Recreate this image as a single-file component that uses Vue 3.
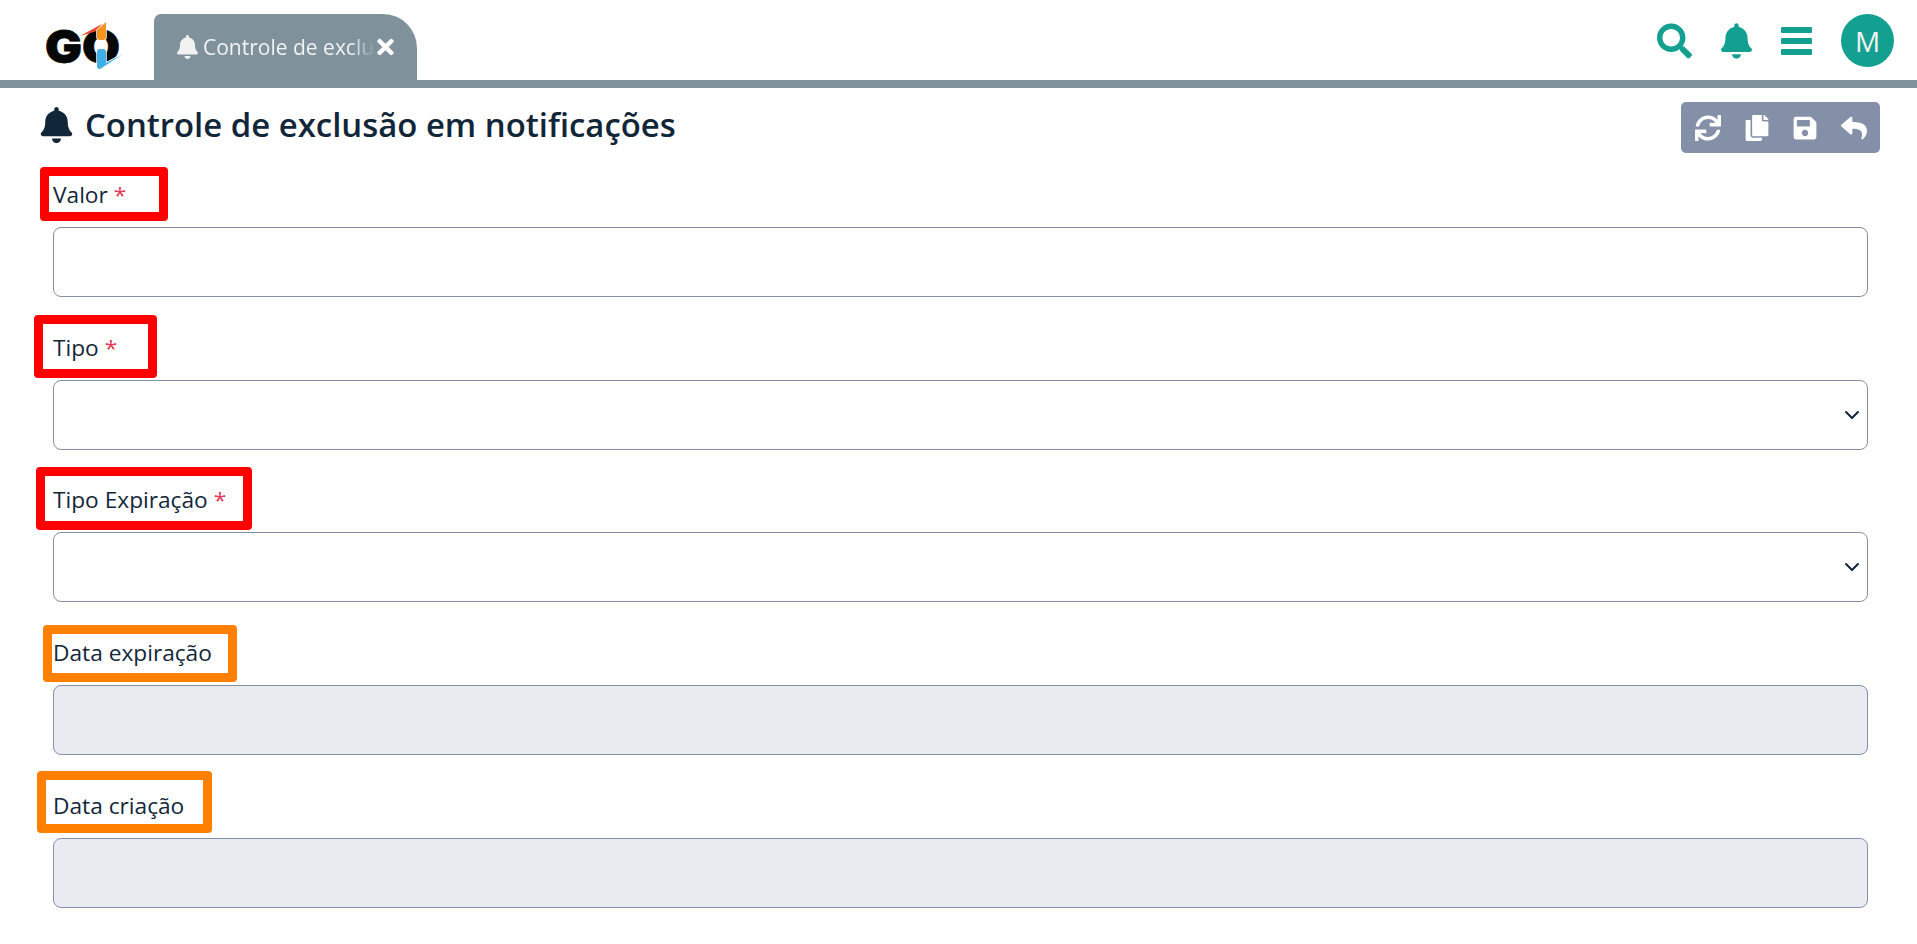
<template>
  <div class="pagina">
    <!-- Barra superior -->
    <header class="topo">
      <div class="marca">
        <svg class="logo" viewBox="0 0 78 48">
          <text x="0" y="41.5" textLength="75" lengthAdjust="spacingAndGlyphs" class="logo-letras">GO</text>
          <path d="M35 15 L57 3 L52 10 Z" fill="#e8452a" />
          <path d="M52 9 L61 1 V16 Q61 19 58 19 H55 Q52 19 52 16 Z" fill="#f7941d" stroke="#fff" stroke-width="1.5" paint-order="stroke" />
          <path d="M52 31 Q52 28 55 28 H58 Q61 28 61 31 V42 L78 33 L55 48 Q52 48 52 45 Z" fill="#3fb0e8" stroke="#fff" stroke-width="1.5" paint-order="stroke" />
        </svg>
      </div>
      <div class="aba">
        <svg class="aba-sino" viewBox="0 0 448 512"><path :d="icones.sino" /></svg>
        <span class="aba-texto">Controle de exclusão em notificações</span>
        <svg class="aba-fechar" viewBox="0 0 352 512"><path :d="icones.fechar" /></svg>
      </div>
      <nav class="topo-acoes">
        <svg class="icone-busca" viewBox="0 0 512 512"><path :d="icones.busca" /></svg>
        <svg class="icone-topo" viewBox="0 0 448 512"><path :d="icones.sino" /></svg>
        <svg class="icone-topo" viewBox="0 0 31 36">
          <rect y="4" width="31" height="6" rx="1" />
          <rect y="15" width="31" height="6" rx="1" />
          <rect y="26" width="31" height="6" rx="1" />
        </svg>
        <div class="avatar">M</div>
      </nav>
    </header>

    <main class="conteudo">
      <div class="cabecalho">
        <h1 class="titulo">
          <svg class="titulo-sino" viewBox="0 0 448 512"><path :d="icones.sino" /></svg>
          Controle de exclusão em notificações
        </h1>
        <div class="ferramentas">
          <svg viewBox="0 0 512 512"><path :d="icones.sync" /></svg>
          <svg viewBox="0 0 448 512"><path :d="icones.copiar" /></svg>
          <svg viewBox="0 0 448 512"><path :d="icones.salvar" /></svg>
          <svg viewBox="0 0 512 512"><path :d="icones.voltar" /></svg>
        </div>
      </div>

      <!-- Campos do formulário, com a marcação vermelha ou laranja por cima do rótulo -->
      <div v-for="campo in campos" :key="campo.rotulo" class="campo">
        <label class="rotulo">
          {{ campo.rotulo }}<span v-if="campo.obrigatorio" class="asterisco"> *</span>
          <span
            class="marcacao"
            :style="{ left: campo.marca[0] + 'px', top: campo.marca[1] + 'px', width: campo.marca[2] + 'px', height: campo.marca[3] + 'px', borderColor: campo.obrigatorio ? '#ff0000' : '#ff7f00' }"
          ></span>
        </label>
        <select v-if="campo.tipo === 'select'" class="entrada seletor"></select>
        <input v-else class="entrada" type="text" :disabled="campo.tipo === 'bloqueado'" />
      </div>
    </main>
  </div>
</template>

<script setup>
const campos = [
  { rotulo: 'Valor', obrigatorio: true, tipo: 'texto', marca: [-13, -13, 128, 54] },
  { rotulo: 'Tipo', obrigatorio: true, tipo: 'select', marca: [-19, -18, 123, 63] },
  { rotulo: 'Tipo Expiração', obrigatorio: true, tipo: 'select', marca: [-17, -18, 216, 63] },
  { rotulo: 'Data expiração', obrigatorio: false, tipo: 'bloqueado', marca: [-10, -13, 194, 57] },
  { rotulo: 'Data criação', obrigatorio: false, tipo: 'bloqueado', marca: [-16, -20, 175, 62] }
]

const icones = {
  sino: 'M224 512c35.32 0 63.97-28.65 63.97-64H160.03c0 35.35 28.65 64 63.97 64zm215.39-149.71c-19.32-20.76-55.47-51.99-55.47-154.29 0-77.7-54.48-139.9-127.94-155.16V32c0-17.67-14.32-32-31.98-32s-31.98 14.33-31.98 32v20.84C118.56 68.1 64.08 130.3 64.08 208c0 102.3-36.15 133.53-55.47 154.29-6 6.45-8.66 14.16-8.61 21.71.11 16.4 12.98 32 32.1 32h383.8c19.12 0 32-15.6 32.1-32 .05-7.55-2.61-15.27-8.61-21.71z',
  busca: 'M505 442.7L405.3 343c-4.5-4.5-10.6-7-17-7H372c27.6-35.3 44-79.7 44-128C416 93.1 322.9 0 208 0S0 93.1 0 208s93.1 208 208 208c48.3 0 92.7-16.4 128-44v16.3c0 6.4 2.5 12.5 7 17l99.7 99.7c9.4 9.4 24.6 9.4 33.9 0l28.3-28.3c9.4-9.4 9.4-24.6.1-34zM208 336c-70.7 0-128-57.2-128-128 0-70.7 57.2-128 128-128 70.7 0 128 57.2 128 128 0 70.7-57.2 128-128 128z',
  fechar: 'M242.72 256l100.07-100.07c12.28-12.28 12.28-32.19 0-44.48l-22.24-22.24c-12.28-12.28-32.19-12.28-44.48 0L176 189.28 75.93 89.21c-12.28-12.28-32.19-12.28-44.48 0L9.21 111.45c-12.28 12.28-12.28 32.19 0 44.48L109.28 256 9.21 356.07c-12.28 12.28-12.28 32.19 0 44.48l22.24 22.24c12.28 12.28 32.2 12.28 44.48 0L176 322.72l100.07 100.07c12.28 12.28 32.2 12.28 44.48 0l22.24-22.24c12.28-12.28 12.28-32.19 0-44.48L242.72 256z',
  sync: 'M440.65 12.57l4 82.77A247.16 247.16 0 0 0 255.83 8C134.73 8 33.91 94.92 12.29 209.82A12 12 0 0 0 24.09 224h49.05a12 12 0 0 0 11.67-9.26 175.91 175.91 0 0 1 317-56.94l-101.46-4.86a12 12 0 0 0-12.57 12v47.41a12 12 0 0 0 12 12H500a12 12 0 0 0 12-12V12a12 12 0 0 0-12-12h-47.37a12 12 0 0 0-11.98 12.57zM255.83 432a175.61 175.61 0 0 1-146-77.8l101.8 4.87a12 12 0 0 0 12.57-12v-47.4a12 12 0 0 0-12-12H12a12 12 0 0 0-12 12V500a12 12 0 0 0 12 12h47.35a12 12 0 0 0 12-12.6l-4.15-82.57A247.17 247.17 0 0 0 255.83 504c121.11 0 221.93-86.92 243.55-201.82a12 12 0 0 0-11.8-14.18h-49.05a12 12 0 0 0-11.67 9.26A175.86 175.86 0 0 1 255.83 432z',
  copiar: 'M320 448v40c0 13.255-10.745 24-24 24H24c-13.255 0-24-10.745-24-24V120c0-13.255 10.745-24 24-24h72v296c0 30.879 25.121 56 56 56h168zm0-344V0H152c-13.255 0-24 10.745-24 24v368c0 13.255 10.745 24 24 24h272c13.255 0 24-10.745 24-24V128H344c-13.2 0-24-10.8-24-24zm120.971-31.029L375.029 7.029A24 24 0 0 0 358.059 0H352v96h96v-6.059a24 24 0 0 0-7.029-16.97z',
  salvar: 'M433.941 129.941l-83.882-83.882A48 48 0 0 0 316.118 32H48C21.49 32 0 53.49 0 80v352c0 26.51 21.49 48 48 48h352c26.51 0 48-21.49 48-48V163.882a48 48 0 0 0-14.059-33.941zM224 416c-35.346 0-64-28.654-64-64 0-35.346 28.654-64 64-64s64 28.654 64 64c0 35.346-28.654 64-64 64zm96-304.52V212c0 6.627-5.373 12-12 12H76c-6.627 0-12-5.373-12-12V108c0-6.627 5.373-12 12-12h228.52c3.183 0 6.235 1.264 8.485 3.515l3.48 3.48A11.996 11.996 0 0 1 320 111.48z',
  voltar: 'M8.309 189.836L184.313 37.851C199.719 24.546 224 35.347 224 56.015v80.053c160.629 1.839 288 34.032 288 186.258 0 61.441-39.581 122.309-83.333 154.132-13.653 9.931-33.111-2.533-28.077-18.631 45.344-145.012-21.507-183.51-176.59-185.742V360c0 20.7-24.3 31.453-39.687 18.164l-176.004-152c-11.071-9.562-11.086-26.753 0-36.328z'
}
</script>

<style>
html, body { margin: 0; background: #fff; }
</style>

<style scoped>
.pagina {
  font-family: "Open Sans", "Noto Sans", sans-serif;
  color: #12263a;
}

.topo {
  display: flex;
  align-items: flex-end;
  height: 80px;
  border-bottom: 8px solid #7f929c;
  position: relative;
}

.marca {
  width: 154px;
  height: 80px;
  flex-shrink: 0;
  display: flex;
  align-items: flex-start;
  padding: 21px 0 0 45px;
  box-sizing: border-box;
}

.logo {
  width: 78px;
  height: 48px;
  overflow: visible;
}

.logo-letras {
  font-family: "Inter", "Liberation Sans", sans-serif;
  font-weight: 900;
  font-size: 46px;
  fill: #060808;
  stroke: #060808;
  stroke-width: 0.8;
}

.aba {
  display: flex;
  align-items: center;
  width: 263px;
  height: 74px;
  margin-bottom: -8px;
  padding: 0 0 8px 23px;
  box-sizing: border-box;
  background: #7f929c;
  border-radius: 7px 34px 0 0;
  color: #f2f2f2;
  font-size: 21px;
  flex-shrink: 0;
}

.aba-sino {
  width: 21px;
  height: 24px;
  fill: #f2f2f2;
  flex-shrink: 0;
}

.aba-texto {
  width: 172px;
  margin-left: 5px;
  white-space: nowrap;
  overflow: hidden;
  flex-shrink: 0;
  -webkit-mask-image: linear-gradient(to right, #000 86%, transparent);
  mask-image: linear-gradient(to right, #000 86%, transparent);
}

.aba-fechar {
  width: 17px;
  height: 24px;
  fill: #fff;
  margin-left: 2px;
  flex-shrink: 0;
}

.topo-acoes {
  margin-left: auto;
  display: flex;
  align-items: center;
  gap: 29px;
  height: 80px;
  box-sizing: border-box;
  padding: 1px 23px 0 0;
}

.icone-busca {
  width: 35px;
  height: 36px;
  fill: #13a090;
}

.icone-topo {
  width: 31px;
  height: 36px;
  fill: #13a090;
}

.avatar {
  width: 53px;
  height: 53px;
  border-radius: 50%;
  background: #13a090;
  color: #f2f2f2;
  font-size: 28px;
  display: flex;
  align-items: center;
  justify-content: center;
}

.conteudo {
  padding: 0 49px 0 53px;
}

.cabecalho {
  display: flex;
  justify-content: space-between;
  align-items: flex-start;
  height: 92px;
  padding-top: 14px;
  box-sizing: border-box;
}

.titulo {
  margin: 1px 0 0 -13px;
  font-size: 32.9px;
  font-weight: 600;
  line-height: 44px;
  display: flex;
  align-items: center;
  gap: 12px;
}

.titulo-sino {
  width: 33px;
  height: 36px;
  fill: #12263a;
}

.ferramentas {
  display: flex;
  align-items: center;
  justify-content: space-between;
  width: 199px;
  height: 51px;
  margin-right: -12px;
  padding: 0 13px 0 14px;
  box-sizing: border-box;
  background: #8490a8;
  border-radius: 5px;
}

.ferramentas svg {
  width: 26px;
  height: 26px;
  fill: #fff;
}

.campo {
  margin-bottom: 35.7px;
}

.rotulo {
  display: block;
  position: relative;
  font-size: 22.7px;
  line-height: 30px;
  margin-bottom: 17px;
}

.asterisco {
  color: #e63757;
}

.marcacao {
  position: absolute;
  box-sizing: border-box;
  border: 9px solid;
  border-radius: 4px;
  pointer-events: none;
}

.entrada {
  display: block;
  width: 100%;
  height: 70px;
  box-sizing: border-box;
  border: 1px solid #8490a8;
  border-radius: 8px;
  background-color: #fff;
  font: inherit;
  outline: none;
}

.entrada:disabled {
  background-color: #e8ebef;
}

.seletor {
  appearance: none;
  background-image: url("data:image/svg+xml,%3csvg xmlns='http://www.w3.org/2000/svg' viewBox='0 0 16 16'%3e%3cpath fill='none' stroke='%2312263a' stroke-linecap='round' stroke-linejoin='round' stroke-width='2' d='m2 5 6 6 6-6'/%3e%3c/svg%3e");
  background-repeat: no-repeat;
  background-position: right 7px center;
  background-size: 16px 16px;
}
</style>
